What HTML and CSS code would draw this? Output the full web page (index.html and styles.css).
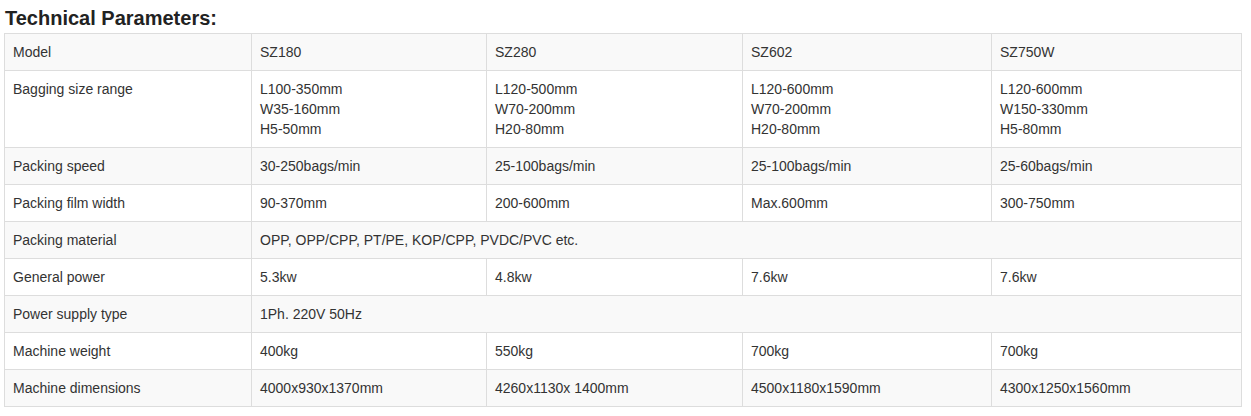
FILE: index.html
```html
<!DOCTYPE html>
<html>
<head>
<meta charset="utf-8">
<link rel="stylesheet" href="styles.css">
</head>
<body>
<div class="page">
  <h3 class="title">Technical Parameters:</h3>
  <table class="params">
    <colgroup>
      <col class="c1"><col class="c2"><col class="c3"><col class="c4"><col class="c5">
    </colgroup>
    <tbody>
      <tr><td>Model</td><td>SZ180</td><td>SZ280</td><td>SZ602</td><td>SZ750W</td></tr>
      <tr><td>Bagging size range</td><td>L100-350mm<br>W35-160mm<br>H5-50mm</td><td>L120-500mm<br>W70-200mm<br>H20-80mm</td><td>L120-600mm<br>W70-200mm<br>H20-80mm</td><td>L120-600mm<br>W150-330mm<br>H5-80mm</td></tr>
      <tr><td>Packing speed</td><td>30-250bags/min</td><td>25-100bags/min</td><td>25-100bags/min</td><td>25-60bags/min</td></tr>
      <tr><td>Packing film width</td><td>90-370mm</td><td>200-600mm</td><td>Max.600mm</td><td>300-750mm</td></tr>
      <tr><td>Packing material</td><td colspan="4">OPP, OPP/CPP, PT/PE, KOP/CPP, PVDC/PVC etc.</td></tr>
      <tr><td>General power</td><td>5.3kw</td><td>4.8kw</td><td>7.6kw</td><td>7.6kw</td></tr>
      <tr><td>Power supply type</td><td colspan="4">1Ph. 220V 50Hz</td></tr>
      <tr><td>Machine weight</td><td>400kg</td><td>550kg</td><td>700kg</td><td>700kg</td></tr>
      <tr><td>Machine dimensions</td><td>4000x930x1370mm</td><td>4260x1130x 1400mm</td><td>4500x1180x1590mm</td><td>4300x1250x1560mm</td></tr>
    </tbody>
  </table>
</div>
</body>
</html>
```

FILE: styles.css
```css
html, body {
  margin: 0;
  padding: 0;
  background: #fff;
}
body {
  font-family: "Liberation Sans", Arial, sans-serif;
  color: #333;
}
.page {
  padding: 0 0 0 4px;
}
.title {
  margin: 7px 0 4px 1px;
  font-size: 20px;
  line-height: 22px;
  font-weight: bold;
  color: #222;
}
.params {
  border-collapse: collapse;
  table-layout: fixed;
  width: 1238px;
  border: 1px solid #ddd;
  font-size: 14px;
  line-height: 20px;
}
.params td {
  border: 1px solid #ddd;
  padding: 8px;
  vertical-align: top;
  text-align: left;
}
.params tr:nth-child(odd) {
  background: #f9f9f9;
}
.c1 { width: 247px; }
.c2 { width: 235px; }
.c3 { width: 256px; }
.c4 { width: 249px; }
.c5 { width: 250px; }
```
